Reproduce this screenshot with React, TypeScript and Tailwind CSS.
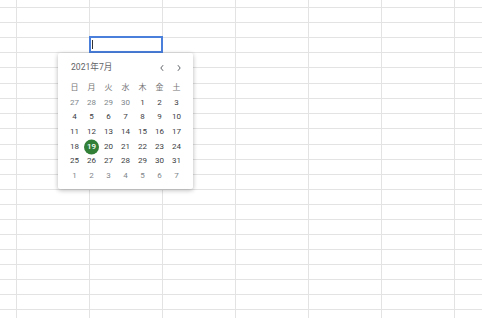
import React from "react";

const rowHeights = [8, 15, 15, 15, 15, 16, 15, 15, 15, 16, 15, 15, 15, 15, 15, 15, 15, 15, 15, 15, 15, 15];
const colWidths = [17, 73, 73, 73, 73, 73, 73, 73];

const weekdays = ["日", "月", "火", "水", "木", "金", "土"];

type Day = { n: number; cur: boolean };

function buildDays(): Day[][] {
  const days: Day[] = [];
  [27, 28, 29, 30].forEach((n) => days.push({ n, cur: false }));
  for (let i = 1; i <= 31; i++) days.push({ n: i, cur: true });
  for (let i = 1; i <= 7; i++) days.push({ n: i, cur: false });
  const rows: Day[][] = [];
  for (let r = 0; r < 6; r++) rows.push(days.slice(r * 7, r * 7 + 7));
  return rows;
}

const font = { fontFamily: "Roboto, 'Noto Sans CJK JP', sans-serif" };

function Chevron({ dir }: { dir: "left" | "right" }) {
  return (
    <svg width="6" height="8" viewBox="0 0 6 8" fill="none">
      {dir === "left" ? (
        <path d="M4.1 1.2 L1.8 4 L4.1 6.8" stroke="#5f6368" strokeWidth="1" />
      ) : (
        <path d="M1.9 1.2 L4.2 4 L1.9 6.8" stroke="#5f6368" strokeWidth="1" />
      )}
    </svg>
  );
}

export default function App() {
  const rows = buildDays();
  return (
    <div className="relative w-[482px] h-[318px] overflow-hidden bg-white" style={font}>
      <div className="flex flex-col">
        {rowHeights.map((h, ri) => (
          <div key={ri} className="flex shrink-0" style={{ height: h }}>
            {colWidths.map((w, ci) => (
              <div
                key={ci}
                className="shrink-0 border-r border-b border-[#e3e3e3]"
                style={{ width: w }}
              />
            ))}
          </div>
        ))}
      </div>

      {/* active cell editor */}
      <div className="absolute left-[89px] top-[36px] w-[74px] h-[17px] border-2 border-[#4a7fdc] bg-white">
        <div className="absolute left-[1px] top-[2px] w-px h-[9px] bg-[#333]" />
      </div>

      {/* date picker */}
      <div className="absolute left-[58px] top-[53px] w-[135px] h-[136px] bg-white rounded-[2px] shadow-[0_1px_4px_rgba(0,0,0,0.22),0_2px_6px_rgba(0,0,0,0.08)]">
        <div className="flex items-center h-[28px] pt-[1px] pl-[13px] pr-[6px]">
          <div className="flex-1 text-[8.6px] text-[#5f6368]">2021年7月</div>
          <div className="flex">
            <div className="w-[17px] h-[14px] flex items-center justify-center">
              <Chevron dir="left" />
            </div>
            <div className="w-[17px] h-[14px] flex items-center justify-center">
              <Chevron dir="right" />
            </div>
          </div>
        </div>
        <div className="pl-[8px]">
          <div className="grid grid-cols-[repeat(7,17px)] h-[14.57px] items-center">
            {weekdays.map((w) => (
              <div key={w} className="text-center text-[8px] text-[#757575] leading-none">
                {w}
              </div>
            ))}
          </div>
          {rows.map((r, ri) => (
            <div key={ri} className="grid grid-cols-[repeat(7,17px)] h-[14.57px] items-center">
              {r.map((d, di) => {
                const sel = d.cur && d.n === 19;
                return (
                  <div key={di} className="relative flex items-center justify-center h-full">
                    {sel && (
                      <div className="absolute left-[1px] top-1/2 -translate-y-1/2 w-[15px] h-[15px] rounded-full bg-[#327f37]" />
                    )}
                    <span
                      className={
                        "relative text-[8px] leading-none " +
                        (sel
                          ? "text-white font-medium"
                          : d.cur
                          ? "text-[#3c4043]"
                          : "text-[#80868b]")
                      }
                    >
                      {d.n}
                    </span>
                  </div>
                );
              })}
            </div>
          ))}
        </div>
      </div>
    </div>
  );
}
